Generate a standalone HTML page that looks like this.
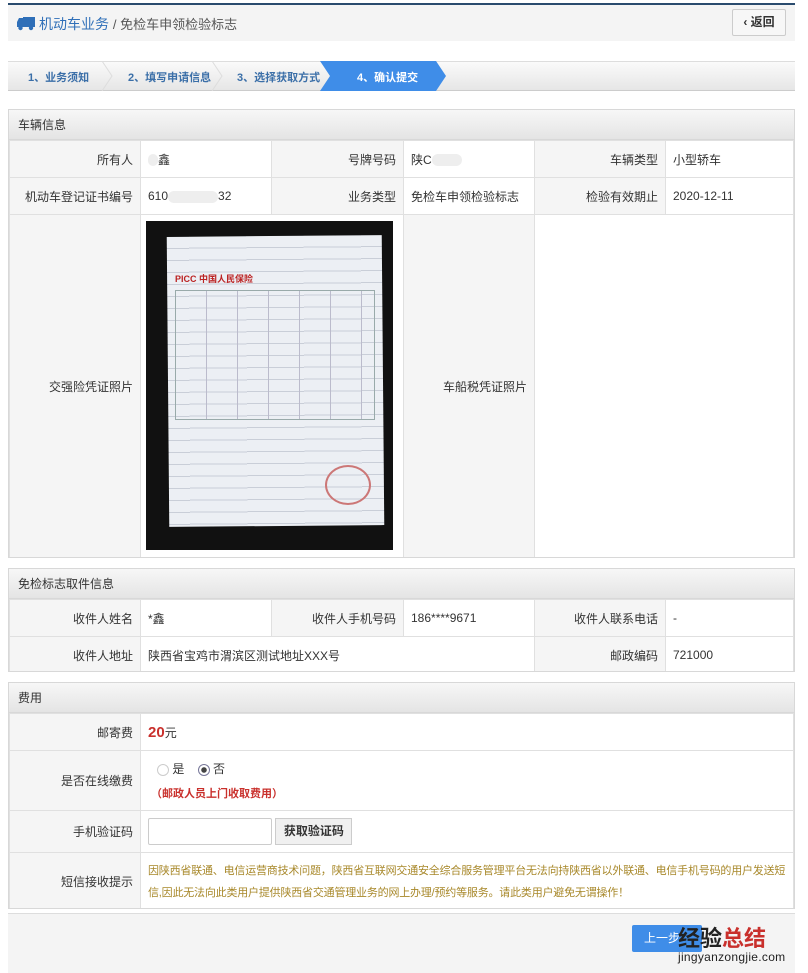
<!DOCTYPE html>
<html><head><meta charset="utf-8"><style>
*{margin:0;padding:0;box-sizing:border-box}
body{width:808px;height:973px;background:#fff;font-family:"Liberation Sans","Noto Sans CJK SC",sans-serif;font-size:12px;color:#333;position:relative;overflow:hidden}
.a{position:absolute}
.hdr{left:8px;top:3px;width:787px;height:38px;background:#f4f4f4;border-top:2px solid #2a4b6e}
.steps{left:8px;top:61px;width:787px;height:30px;background:linear-gradient(#fafafa,#e6e6e6);border-top:1px solid #ddd;border-bottom:1px solid #ccc}
.sec{left:8px;width:787px;border:1px solid #d8d8d8;overflow:hidden}
.sh{height:30px;background:linear-gradient(#f7f7f7,#e4e4e4);line-height:30px;padding-left:9px;font-size:12px;color:#333;border-bottom:1px solid #d8d8d8}
table{border-collapse:collapse;width:100%;table-layout:fixed}
td{border:1px solid #e0e0e0;padding:0 7px;font-size:12px}
td.l{background:#f5f5f5;text-align:right;color:#333}
td.v{background:#fff}
.blur{display:inline-block;background:#eee;border-radius:6px;height:12px;vertical-align:middle}
</style></head><body>
<div class="a hdr"></div>
<div class="a" style="left:17px;top:16px;width:17px;height:14px">
<svg width="18" height="15" viewBox="0 0 18 15"><rect x="6" y="1" width="12" height="10" fill="#2f6fb8"/><path d="M0 6 L2 2 H6 V11 H0Z" fill="#2f6fb8"/><circle cx="3.5" cy="12" r="2.2" fill="#2f6fb8"/><circle cx="14" cy="12" r="2.2" fill="#2f6fb8"/></svg></div>
<div class="a" style="left:39px;top:14px;font-size:14px;color:#2f6fb8">机动车业务 <span style="color:#555;font-size:13px">/ 免检车申领检验标志</span></div>
<div class="a" style="left:732px;top:9px;width:54px;height:27px;border:1px solid #ccc;background:#f7f7f7;border-radius:2px;font-size:12px;line-height:25px;text-align:center;font-weight:bold;color:#333">‹ 返回</div>

<div class="a steps"></div>
<div class="a" style="left:28px;top:69px;color:#3b6fa8;font-size:11px;font-weight:bold">1、业务须知</div>
<div class="a" style="left:128px;top:69px;color:#3b6fa8;font-size:11px;font-weight:bold">2、填写申请信息</div>
<div class="a" style="left:237px;top:69px;color:#3b6fa8;font-size:11px;font-weight:bold">3、选择获取方式</div>
<svg class="a" style="left:100px;top:61px" width="14" height="30"><path d="M2 0 L12 15 L2 30" fill="none" stroke="#ddd"/></svg>
<svg class="a" style="left:210px;top:61px" width="14" height="30"><path d="M2 0 L12 15 L2 30" fill="none" stroke="#ddd"/></svg>
<svg class="a" style="left:318px;top:61px" width="130" height="30"><path d="M2 0 H118 L128 15 L118 30 H2 L12 15Z" fill="#3f8de8"/></svg>
<div class="a" style="left:357px;top:69px;color:#fff;font-size:11px;font-weight:bold">4、确认提交</div>

<div class="a sec" style="top:109px;height:449px">
<div class="sh">车辆信息</div>
<table>
<colgroup><col style="width:131px"><col style="width:131px"><col style="width:132px"><col style="width:131px"><col style="width:131px"><col></colgroup>
<tr style="height:37px"><td class="l">所有人</td><td class="v"><span class="blur" style="width:10px"></span>鑫</td><td class="l">号牌号码</td><td class="v">陕C<span class="blur" style="width:30px"></span></td><td class="l">车辆类型</td><td class="v">小型轿车</td></tr>
<tr style="height:37px"><td class="l">机动车登记证书编号</td><td class="v">610<span class="blur" style="width:50px"></span>32</td><td class="l">业务类型</td><td class="v">免检车申领检验标志</td><td class="l">检验有效期止</td><td class="v">2020-12-11</td></tr>
<tr style="height:344px"><td class="l">交强险凭证照片</td><td colspan="2" style="padding:0"></td><td class="l">车船税凭证照片</td><td colspan="2"></td></tr>
</table>
</div>
<div class="a" style="left:146px;top:221px;width:247px;height:329px;background:#111"></div>
<div class="a" style="left:168px;top:236px;width:215px;height:290px;background:repeating-linear-gradient(#eceff4 0 11px,#c9ced8 11px 12px);transform:rotate(-0.5deg)"></div>
<div class="a" style="left:175px;top:290px;width:200px;height:130px;border:1px solid #9aa;background:repeating-linear-gradient(90deg,transparent 0 30px,#bbc 30px 31px)"></div>
<div class="a" style="left:175px;top:272px;font-size:9px;font-weight:bold;color:#b22">PICC 中国人民保险</div>
<div class="a" style="left:325px;top:465px;width:46px;height:40px;border:2px solid #c77;border-radius:50%"></div>

<div class="a sec" style="top:568px;height:104px">
<div class="sh">免检标志取件信息</div>
<table>
<colgroup><col style="width:131px"><col style="width:131px"><col style="width:132px"><col style="width:131px"><col style="width:131px"><col></colgroup>
<tr style="height:37px"><td class="l">收件人姓名</td><td class="v">*鑫</td><td class="l">收件人手机号码</td><td class="v">186****9671</td><td class="l">收件人联系电话</td><td class="v">-</td></tr>
<tr style="height:37px"><td class="l">收件人地址</td><td colspan="3">陕西省宝鸡市渭滨区测试地址XXX号</td><td class="l">邮政编码</td><td class="v">721000</td></tr>
</table>
</div>

<div class="a sec" style="top:682px;height:227px">
<div class="sh">费用</div>
<table>
<colgroup><col style="width:131px"><col></colgroup>
<tr style="height:37px"><td class="l">邮寄费</td><td><b style="color:#c9302c;font-size:15px">20</b>元</td></tr>
<tr style="height:60px"><td class="l">是否在线缴费</td><td style="padding-left:16px"><div><span style="display:inline-block;width:12px;height:12px;border:1px solid #ccc;border-radius:50%;vertical-align:middle"></span> 是 &nbsp;&nbsp;&nbsp;<span style="display:inline-block;width:12px;height:12px;border:1px solid #779;border-radius:50%;vertical-align:middle;background:radial-gradient(#444 0 2.5px,#fff 3px)"></span> 否</div><div style="color:#c9302c;font-weight:bold;margin-top:8px;margin-left:-6px;font-size:11px">（邮政人员上门收取费用）</div></td></tr>
<tr style="height:42px"><td class="l">手机验证码</td><td><span style="display:inline-block;width:124px;height:27px;border:1px solid #ccc;border-radius:2px;vertical-align:middle"></span> <span style="display:inline-block;width:77px;height:27px;border:1px solid #ccc;background:#f0f0f0;vertical-align:middle;text-align:center;line-height:25px;font-weight:bold">获取验证码</span></td></tr>
<tr style="height:58px"><td class="l">短信接收提示</td><td style="color:#a8882a;line-height:22px;font-size:11px;letter-spacing:-0.2px">因陕西省联通、电信运营商技术问题，陕西省互联网交通安全综合服务管理平台无法向持陕西省以外联通、电信手机号码的用户发送短信,因此无法向此类用户提供陕西省交通管理业务的网上办理/预约等服务。请此类用户避免无谓操作！</td></tr>
</table>
</div>

<div class="a" style="left:8px;top:913px;width:787px;height:60px;background:#f4f4f4;border-top:1px solid #ddd"></div>
<div class="a" style="left:632px;top:925px;width:70px;height:27px;background:#3f8de8;border-radius:2px;color:#fff;line-height:27px;padding-left:12px">上一步</div>
<div class="a" style="left:678px;top:921px;font-size:22px;font-weight:bold;color:#222">经验<span style="color:#c9302c">总结</span></div>
<div class="a" style="left:678px;top:950px;font-size:12px;color:#222;font-family:'Liberation Sans',sans-serif;letter-spacing:0.3px">jingyanzongjie.com</div>
</body></html>
